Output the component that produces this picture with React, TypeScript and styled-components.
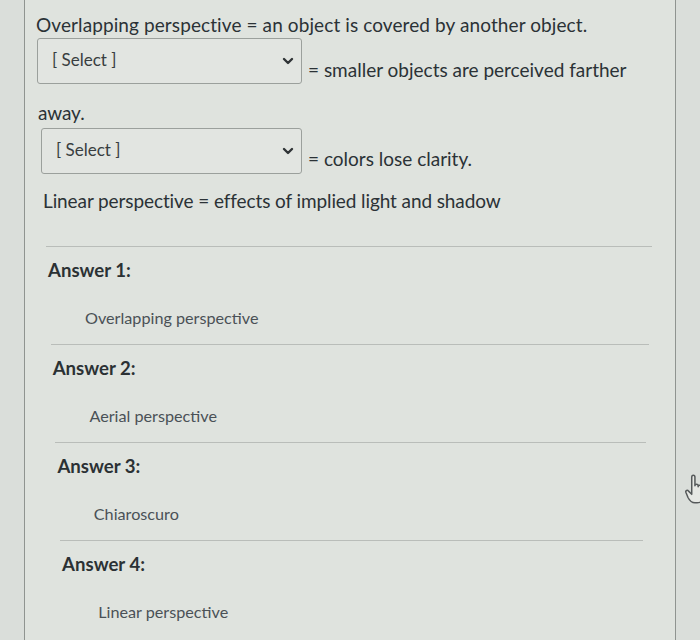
import React from "react";
import styled, { createGlobalStyle } from "styled-components";

const GlobalStyle = createGlobalStyle`
    html, body {
        margin: 0;
        padding: 0;
        background: #dadeda;
    }
    body {
        font-family: Lato, "Open Sans", "Liberation Sans", sans-serif;
    }
`;

const Page = styled.div`
    position: relative;
    width: 700px;
    height: 640px;
    overflow: hidden;
    background: #dadeda;
`;

const Card = styled.div`
    margin-left: 24px;
    width: 652px;
    height: 640px;
    box-sizing: border-box;
    padding-top: 13px;
    border-left: 1px solid #8f9490;
    border-right: 1px solid #8f9490;
    background: #dfe3de;
    display: flex;
    flex-direction: column;
`;

const TextLine = styled.div<{ $shift: number; $gap?: number; $spacing?: number }>`
    margin-top: ${(p) => p.$gap ?? 0}px;
    padding-left: ${(p) => p.$shift}px;
    font-size: 19px;
    line-height: 24px;
    color: #2b3236;
    letter-spacing: ${(p) => p.$spacing ?? -0.1}px;
    white-space: nowrap;
`;

const SelectRow = styled.div<{ $shift: number; $gap?: number }>`
    margin-top: ${(p) => p.$gap ?? 0}px;
    padding-left: ${(p) => p.$shift}px;
    display: flex;
    align-items: center;
`;

const SelectBox = styled.div<{ $width: number }>`
    width: ${(p) => p.$width}px;
    height: 46px;
    box-sizing: border-box;
    border: 1px solid #9ba09c;
    border-radius: 3px;
    background: #e2e5e1;
    display: flex;
    align-items: center;
    justify-content: space-between;
    padding: 0 7px 0 14px;
    margin-top: ${(p) => (p.$width > 263 ? -2 : 0)}px;
`;

const SelectLabel = styled.span`
    font-size: 17px;
    color: #383d40;
    margin-top: -4px;
`;

const Trailing = styled.span`
    margin-left: 6px;
    margin-top: 14px;
    font-size: 19px;
    color: #2b3236;
    white-space: nowrap;
`;

const Separator = styled.div<{ $shift: number; $gap: number }>`
    margin-top: ${(p) => p.$gap}px;
    margin-left: ${(p) => 21 + p.$shift}px;
    margin-right: ${(p) => 23 + p.$shift * 0.7}px;
    height: 1px;
    background: #b9bdb9;
`;

const AnswerLabel = styled.div<{ $shift: number }>`
    margin-top: 11px;
    padding-left: ${(p) => 23 + p.$shift}px;
    font-size: 18.6px;
    font-weight: 700;
    line-height: 24px;
    color: #2b3134;
`;

const AnswerValue = styled.div<{ $shift: number }>`
    margin-top: 24px;
    padding-left: ${(p) => 60 + p.$shift}px;
    font-size: 16.2px;
    line-height: 24px;
    color: #4a5156;
`;

const Cursor = styled.svg`
    position: absolute;
    left: 684px;
    top: 473px;
`;

function Chevron() {
    return (
        <svg width="12" height="10" viewBox="0 0 12 10">
            <path d="M2 3 L6 7 L10 3" fill="none" stroke="#2f3336" strokeWidth="2.4" strokeLinecap="round" strokeLinejoin="round" />
        </svg>
    );
}

const answers = ["Overlapping perspective", "Aerial perspective", "Chiaroscuro", "Linear perspective"];

export default function App() {
    return (
        <>
            <GlobalStyle />
            <Page>
                <Card>
                    <TextLine $shift={11} $spacing={0.1}>
                        Overlapping perspective = an object is covered by another object.
                    </TextLine>
                    <SelectRow $shift={12} $gap={3}>
                        <SelectBox $width={265}>
                            <SelectLabel>[ Select ]</SelectLabel>
                            <Chevron />
                        </SelectBox>
                        <Trailing>= smaller objects are perceived farther</Trailing>
                    </SelectRow>
                    <TextLine $shift={13} $gap={17}>away.</TextLine>
                    <SelectRow $shift={16} $gap={3}>
                        <SelectBox $width={261}>
                            <SelectLabel>[ Select ]</SelectLabel>
                            <Chevron />
                        </SelectBox>
                        <Trailing>= colors lose clarity.</Trailing>
                    </SelectRow>
                    <TextLine $shift={18} $gap={15}>Linear perspective = effects of implied light and shadow</TextLine>
                    {answers.map((a, i) => (
                        <React.Fragment key={a}>
                            <Separator $shift={i * 4.5} $gap={i === 0 ? 33 : 14} />
                            <AnswerLabel $shift={i * 4.7}>Answer {i + 1}:</AnswerLabel>
                            <AnswerValue $shift={i * 4.4}>{a}</AnswerValue>
                        </React.Fragment>
                    ))}
                </Card>
                <Cursor width="24" height="32" viewBox="0 0 22 30">
                    <path
                        d="M7 4 C7 1.5 10 1.5 10 4 L10 12 C10 10 13 10 13 12 L13 13 C13 11 16 11 16 13 L16 14 C16 12.5 19 12.5 19 14 L19 20 C19 25 16 28 12 28 L10 28 C7 28 5 26 3.5 23 L1.5 18 C1 16.5 3 15.5 4 17 L7 20 Z"
                        fill="#e6e8e4"
                        stroke="#55595a"
                        strokeWidth="1.4"
                        strokeLinejoin="round"
                    />
                </Cursor>
            </Page>
        </>
    );
}
